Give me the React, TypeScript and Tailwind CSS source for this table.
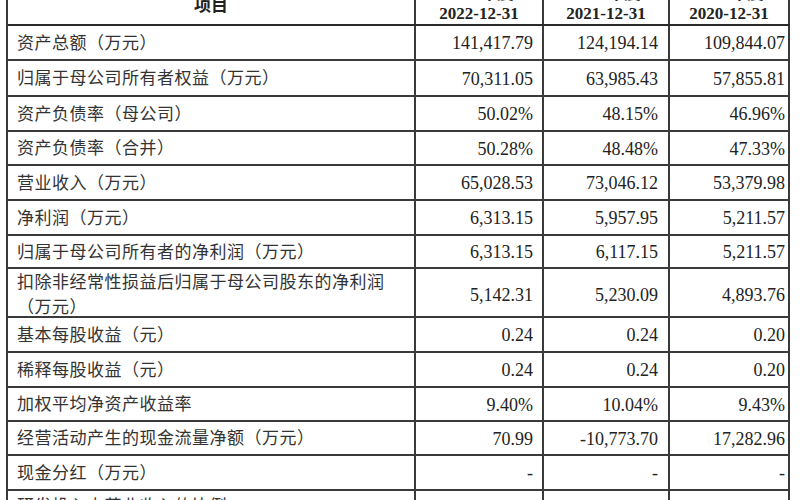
import React from 'react';

const rows = [
  { label: '资产总额（万元）', values: ['141,417.79', '124,194.14', '109,844.07'], h: 'h-[35px]' },
  { label: '归属于母公司所有者权益（万元）', values: ['70,311.05', '63,985.43', '57,855.81'], h: 'h-[36px]' },
  { label: '资产负债率（母公司）', values: ['50.02%', '48.15%', '46.96%'], h: 'h-[35px]' },
  { label: '资产负债率（合并）', values: ['50.28%', '48.48%', '47.33%'], h: 'h-[34px]' },
  { label: '营业收入（万元）', values: ['65,028.53', '73,046.12', '53,379.98'], h: 'h-[35px]' },
  { label: '净利润（万元）', values: ['6,313.15', '5,957.95', '5,211.57'], h: 'h-[35px]' },
  { label: '归属于母公司所有者的净利润（万元）', values: ['6,313.15', '6,117.15', '5,211.57'], h: 'h-[33px]' },
  {
    label: '扣除非经常性损益后归属于母公司股东的净利润',
    second: '（万元）',
    values: ['5,142.31', '5,230.09', '4,893.76'],
    h: 'h-[49px]',
  },
  { label: '基本每股收益（元）', values: ['0.24', '0.24', '0.20'], h: 'h-[35px]' },
  { label: '稀释每股收益（元）', values: ['0.24', '0.24', '0.20'], h: 'h-[35px]' },
  { label: '加权平均净资产收益率', values: ['9.40%', '10.04%', '9.43%'], h: 'h-[34px]' },
  { label: '经营活动产生的现金流量净额（万元）', values: ['70.99', '-10,773.70', '17,282.96'], h: 'h-[34px]' },
  { label: '现金分红（万元）', values: ['-', '-', '-'], h: 'h-[35px]' },
];

const years = ['2022', '2021', '2020'];

const cjk = "font-['Liberation_Serif','Noto_Sans_CJK_SC',serif]";
const num = "font-['Liberation_Serif',serif]";

// per-column right padding so numbers land where the scan has them
const valueCell = [
  'border-r-2 border-[#3a3a3a] pr-[9px]',
  'border-r-2 border-[#3a3a3a] pr-[10px]',
  'border-r-2 border-[#3a3a3a] pr-[3px]',
];

export default function App() {
  return (
    <div className="h-[500px] w-[800px] overflow-hidden bg-white">
      <div className="ml-[6px] mt-[-26px] w-[784px] border-l-2 border-[#3a3a3a] text-[#222]">
        {/* header, top half runs off the scan */}
        <div className="grid h-[52px] grid-cols-[408px_128px_126px_120px] border-b-2 border-[#2a2a2a]">
          <div className={`flex items-end justify-center border-r-2 border-[#3a3a3a] pb-[6px] text-[17px] font-bold ${cjk}`}>
            项目
          </div>
          {years.map((y) => (
            <div
              key={y}
              className={`flex flex-col items-center justify-end border-r-2 border-[#3a3a3a] text-[17px] font-bold leading-[20px] ${num}`}
            >
              <span className={`pl-[36px] ${cjk}`}>年度</span>
              <span>{y}-12-31</span>
            </div>
          ))}
        </div>

        {rows.map((r) => (
          <div
            key={r.label}
            className={`grid grid-cols-[408px_128px_126px_120px] border-b-2 border-[#3a3a3a] ${r.h}`}
          >
            <div
              className={`flex flex-col justify-center border-r-2 border-[#3a3a3a] pl-[9px] pt-[1px] text-[17px] leading-[25px] tracking-[0.5px] text-[#333] ${cjk}`}
            >
              <span className="whitespace-nowrap">{r.label}</span>
              {r.second && <span className="whitespace-nowrap">{r.second}</span>}
            </div>
            {r.values.map((v, i) => (
              <div
                key={i}
                className={`flex items-center justify-end pt-[2px] text-[18px] ${num} ${valueCell[i]}`}
              >
                {v}
              </div>
            ))}
          </div>
        ))}

        {/* last row, cut off by the bottom of the scan */}
        <div className="grid h-[35px] grid-cols-[408px_128px_126px_120px]">
          <div className={`border-r-2 border-[#3a3a3a] pl-[9px] pt-[3px] text-[17px] tracking-[0.5px] text-[#333] ${cjk}`}>
            研发投入占营业收入的比例
          </div>
          <div className={`border-r-2 border-[#3a3a3a] pr-[9px] pt-[4px] text-right text-[18px] ${num}`}>4.52%</div>
          <div className={`border-r-2 border-[#3a3a3a] pr-[10px] pt-[4px] text-right text-[18px] ${num}`}>5.17%</div>
          <div className={`border-r-2 border-[#3a3a3a] pr-[3px] pt-[4px] text-right text-[18px] ${num}`}>5.73%</div>
        </div>
      </div>
    </div>
  );
}
